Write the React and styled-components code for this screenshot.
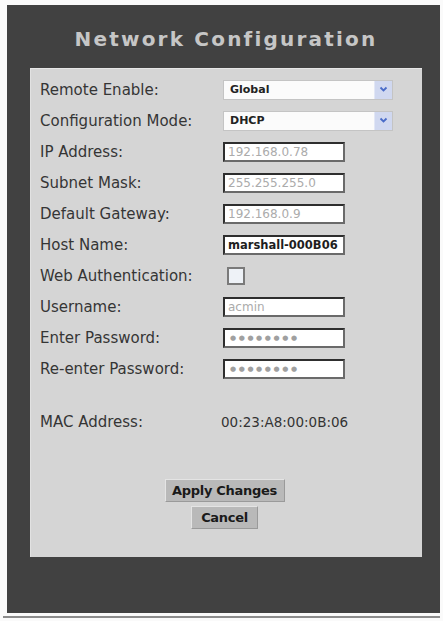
import React from 'react';
import styled, { createGlobalStyle } from 'styled-components';

const GlobalStyle = createGlobalStyle`
    html, body {
        margin: 0;
        padding: 0;
        background: #ffffff;
    }
`;

const Page = styled.div`
    width: 443px;
    height: 621px;
    padding-top: 5px;
    box-sizing: border-box;
    background: #fafafa;
`;

const Frame = styled.div`
    margin-left: 7px;
    width: 433px;
    height: 608px;
    background: #414141;
    padding: 0 18px 0 23px;
    box-sizing: border-box;
    display: flex;
    flex-direction: column;
`;

const Title = styled.h1`
    margin: 0;
    height: 63px;
    display: flex;
    align-items: center;
    justify-content: center;
    padding-top: 4px;
    box-sizing: border-box;
    font-family: "DejaVu Sans", Verdana, sans-serif;
    font-size: 20px;
    font-weight: bold;
    letter-spacing: 2.2px;
    color: #c6c6c6;
`;

const Panel = styled.div`
    height: 489px;
    background: #d5d5d5;
    border-top: 1px solid #e6e6e6;
    border-left: 1px solid #e2e2e2;
    box-sizing: border-box;
    padding: 5px 0 0 9px;
    display: flex;
    flex-direction: column;
`;

const Row = styled.div`
    height: 31px;
    display: grid;
    grid-template-columns: 183px 1fr;
    align-items: center;
    margin-top: ${p => p.gap || 0}px;
`;

const Label = styled.span`
    font-family: "DejaVu Sans", Tahoma, sans-serif;
    font-size: 15px;
    color: #353535;
`;

const Select = styled.div`
    width: 170px;
    height: 20px;
    background: #fbfbfb;
    border: 1px solid #c4c4c4;
    box-sizing: border-box;
    display: flex;
    align-items: center;
    justify-content: space-between;
    padding-left: 6px;
    font-family: "DejaVu Sans", Tahoma, sans-serif;
    font-size: 11px;
    font-weight: bold;
    color: #222;
`;

const Arrow = styled.div`
    width: 17px;
    height: 18px;
    background: #d0d8f0;
    border-left: 1px solid #e2e7f6;
    display: flex;
    align-items: center;
    justify-content: center;
`;

const Field = styled.div`
    width: 122px;
    height: 20px;
    background: #ffffff;
    border: 2px solid #2e2e2e;
    border-right-color: #6a6a6a;
    border-bottom-color: #6a6a6a;
    box-sizing: border-box;
    display: flex;
    align-items: center;
    padding-left: ${p => (p.dots ? '5px' : '3px')};
    font-family: "DejaVu Sans", Tahoma, sans-serif;
    font-size: ${p => (p.dots ? '7px' : p.strong ? '11.5px' : '12px')};
    font-weight: ${p => (p.strong ? 'bold' : 'normal')};
    letter-spacing: ${p => (p.dots ? '2.6px' : '0')};
    color: ${p => (p.strong ? '#1e1e1e' : p.dots ? '#a0a0a0' : '#ababab')};
    white-space: nowrap;
    overflow: hidden;
`;

const Check = styled.div`
    width: 18px;
    height: 18px;
    margin-left: 4px;
    background: #eef2f7;
    border: 2px solid #7a7a7a;
    box-sizing: border-box;
`;

const Value = styled.span`
    font-family: "DejaVu Sans", Tahoma, sans-serif;
    font-size: 13.5px;
    color: #333;
    margin-left: -2px;
`;

const Buttons = styled.div`
    margin-top: 42px;
    display: flex;
    flex-direction: column;
    align-items: center;
    gap: 4px;
    padding-right: 13px;
`;

const Button = styled.button`
    width: ${p => p.w}px;
    height: 23px;
    background: #b9b9b9;
    border: 1px solid #e4e4e4;
    border-right-color: #9a9a9a;
    border-bottom-color: #9a9a9a;
    padding: 0;
    font-family: "DejaVu Sans", Tahoma, sans-serif;
    font-size: 13px;
    font-weight: bold;
    letter-spacing: -0.3px;
    color: #1a1a1a;
`;

const BottomRule = styled.div`
    margin-top: 3px;
    margin-left: 3px;
    width: 437px;
    height: 2px;
    background: #8c8c8c;
`;

const Chevron = () => (
    <svg width="9" height="7" viewBox="0 0 9 7">
        <path d="M1.5 1.5 L4.5 4.5 L7.5 1.5" fill="none" stroke="#4a6cc8" strokeWidth="1.8" />
    </svg>
);

const fields = [
    { label: 'IP Address:', value: '192.168.0.78' },
    { label: 'Subnet Mask:', value: '255.255.255.0' },
    { label: 'Default Gateway:', value: '192.168.0.9' },
    { label: 'Host Name:', value: 'marshall-000B06', strong: true },
];

const App = () => (
    <Page>
        <GlobalStyle />
        <Frame>
            <Title>Network Configuration</Title>
            <Panel>
                <Row>
                    <Label>Remote Enable:</Label>
                    <Select>Global<Arrow><Chevron /></Arrow></Select>
                </Row>
                <Row>
                    <Label>Configuration Mode:</Label>
                    <Select>DHCP<Arrow><Chevron /></Arrow></Select>
                </Row>
                {fields.map(f => (
                    <Row key={f.label}>
                        <Label>{f.label}</Label>
                        <Field strong={f.strong}>{f.value}</Field>
                    </Row>
                ))}
                <Row>
                    <Label>Web Authentication:</Label>
                    <Check />
                </Row>
                <Row>
                    <Label>Username:</Label>
                    <Field>acmin</Field>
                </Row>
                <Row>
                    <Label>Enter Password:</Label>
                    <Field dots>●●●●●●●●</Field>
                </Row>
                <Row>
                    <Label>Re-enter Password:</Label>
                    <Field dots>●●●●●●●●</Field>
                </Row>
                <Row gap={22}>
                    <Label>MAC Address:</Label>
                    <Value>00:23:A8:00:0B:06</Value>
                </Row>
                <Buttons>
                    <Button w={120}>Apply Changes</Button>
                    <Button w={67}>Cancel</Button>
                </Buttons>
            </Panel>
        </Frame>
        <BottomRule />
    </Page>
);

export default App;
